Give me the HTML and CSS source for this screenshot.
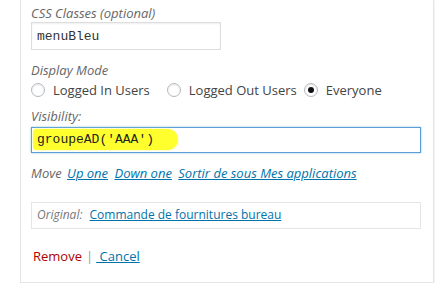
FILE: index.html
```html
<!DOCTYPE html>
<html lang="en">
<head>
  <meta charset="UTF-8">
  <meta name="viewport" content="width=device-width, initial-scale=1.0">
  <title>Menu item settings</title>
  <link rel="stylesheet" href="styles.css">
</head>
<body>
  <div class="menu-item-settings">
    <p class="field field-css">
      <label class="field-label" for="css-classes">CSS Classes (optional)</label>
      <input type="text" id="css-classes" class="text-input small" value="menuBleu">
    </p>

    <div class="field field-mode">
      <span class="field-label">Display Mode</span>
      <div class="radio-row">
        <label class="radio"><span class="radio-dot"></span>Logged In Users</label>
        <label class="radio"><span class="radio-dot"></span>Logged Out Users</label>
        <label class="radio"><span class="radio-dot checked"></span>Everyone</label>
      </div>
    </div>

    <div class="field field-visibility">
      <span class="field-label">Visibility:</span>
      <div class="text-input wide focused">
        <span class="highlight">groupeAD('AAA')</span>
      </div>
    </div>

    <p class="move-row">
      <span class="move-label">Move</span>
      <a href="#">Up one</a>
      <a href="#">Down one</a>
      <a href="#">Sortir de sous Mes applications</a>
    </p>

    <div class="original">
      <span class="original-label">Original:</span>
      <a href="#">Commande de fournitures bureau</a>
    </div>

    <p class="actions">
      <a href="#" class="remove">Remove</a><span class="sep">|</span><a href="#" class="cancel">&nbsp;Cancel</a>
    </p>
  </div>
</body>
</html>
```

FILE: styles.css
```css
/* General styles */
body {
  margin: 0;
  background-color: #fff;
  font-family: "Open Sans", "Liberation Sans", sans-serif;
  font-size: 13px;
  line-height: 18px;
  color: #444;
}

a {
  color: #0073aa;
  text-decoration: underline;
}

/* Settings panel */
.menu-item-settings {
  margin-left: 20px;
  width: 391px;
  padding: 4px 11px 0 10px;
  height: 278px;
  border: 1px solid #e5e5e5;
  border-top: none;
  box-shadow: 1px 1px 1px rgba(0, 0, 0, 0.04);
}

.field {
  margin: 0;
}

.field-label {
  display: block;
  font-style: italic;
  color: #666;
}

/* Inputs */
.text-input {
  display: block;
  box-sizing: border-box;
  margin: 0;
  padding: 0 5px;
  border: 1px solid #ddd;
  box-shadow: inset 0 1px 2px rgba(0, 0, 0, 0.07);
  font-family: "Liberation Mono", "DejaVu Sans Mono", monospace;
  font-size: 13px;
  color: #333;
  background: #fff;
}

.text-input.small {
  width: 190px;
  height: 28px;
}

.text-input.wide {
  width: 390px;
  height: 26px;
  margin-top: 2px;
  padding: 0 1px;
  line-height: 24px;
}

.text-input.focused {
  border-color: #5b9dd9;
  box-shadow: 0 0 2px rgba(30, 140, 190, 0.5);
}

.highlight {
  display: inline-block;
  padding: 0 24px 0 4px;
  line-height: 21px;
  margin-top: 1px;
  background: #ffff2e;
  border-radius: 4px 11px 11px 4px;
  box-shadow: 0 0 2px #ffff60;
  color: #222;
}

/* Display mode radios */
.field-mode {
  margin-top: 11px;
}

.radio-row {
  display: flex;
  gap: 7px;
  margin-top: 2px;
}

.radio {
  display: flex;
  align-items: center;
  gap: 8px;
}

.radio-row .radio:first-child {
  margin-right: 10px;
}

.radio-dot {
  box-sizing: border-box;
  width: 14px;
  height: 14px;
  border: 1px solid #b4b9be;
  border-radius: 50%;
  background: #fff;
  box-shadow: inset 0 1px 2px rgba(0, 0, 0, 0.1);
  display: flex;
  align-items: center;
  justify-content: center;
}

.radio-dot.checked::before {
  content: "";
  width: 6px;
  height: 6px;
  border-radius: 50%;
  background: #111;
}

.field-visibility {
  margin-top: 8px;
}

/* Move links */
.move-row {
  margin: 11px 0 0 0;
  font-style: italic;
}

.move-label {
  color: #666;
  margin-right: 2px;
}

.move-row a {
  margin-right: 3px;
}

/* Original link */
.original {
  box-sizing: border-box;
  width: 390px;
  height: 27px;
  margin-top: 20px;
  padding: 3px 5px;
  border: 1px solid #e5e5e5;
  font-size: 12px;
  line-height: 18px;
}

.original-label {
  font-style: italic;
  color: #777;
  margin-right: 4px;
}

/* Actions */
.actions {
  margin: 18px 0 0 2px;
}

.remove {
  color: #a00;
  text-decoration: none;
}

.sep {
  color: #999;
  margin: 0 3px 0 4px;
}
```
